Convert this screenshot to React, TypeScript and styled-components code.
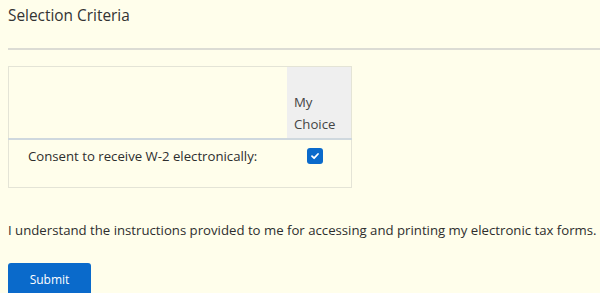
import styled, { createGlobalStyle } from "styled-components";

const GlobalStyle = createGlobalStyle`
  html, body {
    margin: 0;
    padding: 0;
    background-color: #fffeeb;
  }
  body {
    font-family: "Open Sans", "Noto Sans", sans-serif;
    color: #333333;
  }
`;

/* Page containers */
const Page = styled.div`
  display: flex;
  flex-direction: column;
  padding: 0 0 0 8px;
  height: 293px;
  overflow: hidden;
`;

const Title = styled.h2`
  margin: 0;
  padding-top: 5px;
  font-size: 15.4px;
  font-weight: 400;
  line-height: 22px;
  color: #333333;
`;

const Divider = styled.hr`
  margin: 21px 0 0 0;
  border: none;
  border-top: 2px solid #dcdcd4;
  height: 0;
`;

/* Table */
const Table = styled.table`
  margin-top: 16px;
  width: 344px;
  border-collapse: collapse;
  border: 1px solid #e4e4d6;
  font-size: 13.2px;
`;

type HeadCellProps = {
  shaded?: boolean;
};

const HeadCell = styled.th<HeadCellProps>`
  height: 62px;
  padding: 6px 7px 3px 7px;
  vertical-align: bottom;
  text-align: left;
  font-weight: 400;
  line-height: 22px;
  color: #444444;
  background-color: ${({ shaded }) => (shaded ? "#efefef" : "transparent")};
  border-bottom: 2px solid #cfd8de;
`;

type BodyCellProps = {
  narrow?: boolean;
};

const BodyCell = styled.td<BodyCellProps>`
  height: 35px;
  padding: 6px 8px 6px ${({ narrow }) => (narrow ? "20px" : "19px")};
  vertical-align: top;
  text-align: left;
  line-height: 20px;
  color: #2e2e2e;
`;

const CheckBox = styled.span`
  display: inline-flex;
  align-items: center;
  justify-content: center;
  width: 16px;
  height: 16px;
  margin-top: 2px;
  border-radius: 3px;
  background-color: #0a6acb;
  vertical-align: top;
`;

const Statement = styled.p`
  margin: 32px 0 0 0;
  font-size: 13.2px;
  line-height: 20px;
  color: #2e2e2e;
  white-space: nowrap;
`;

const SubmitButton = styled.button`
  margin-top: 23px;
  width: 83px;
  height: 36px;
  border: none;
  border-radius: 3px;
  background-color: #0a6acb;
  color: #ffffff;
  font-family: inherit;
  font-size: 12px;
  text-align: center;
  padding: 0 0 4px 0;
  cursor: pointer;
`;

const CheckIcon = () => (
  <svg width="10" height="10" viewBox="0 0 10 10">
    <path
      d="M2 5.2 L4.1 7.2 L8 3"
      fill="none"
      stroke="#ffffff"
      strokeWidth="1.8"
      strokeLinecap="round"
      strokeLinejoin="round"
    />
  </svg>
);

export default function App() {
  return (
    <>
      <GlobalStyle />
      <Page>
        <Title>Selection Criteria</Title>
        <Divider />
        <Table>
          <thead>
            <tr>
              <HeadCell />
              <HeadCell shaded style={{ width: 50 }}>
                My
                <br />
                Choice
              </HeadCell>
            </tr>
          </thead>
          <tbody>
            <tr>
              <BodyCell>Consent to receive W-2 electronically:</BodyCell>
              <BodyCell narrow>
                <CheckBox>
                  <CheckIcon />
                </CheckBox>
              </BodyCell>
            </tr>
          </tbody>
        </Table>
        <Statement>
          I understand the instructions provided to me for accessing and
          printing my electronic tax forms.
        </Statement>
        <div>
          <SubmitButton>Submit</SubmitButton>
        </div>
      </Page>
    </>
  );
}
